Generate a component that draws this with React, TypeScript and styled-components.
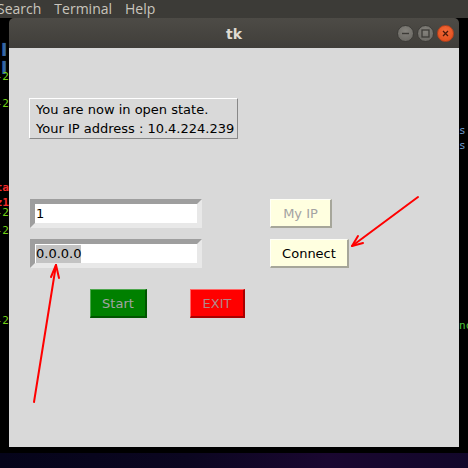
import React from "react";
import styled, { createGlobalStyle } from "styled-components";

const Global = createGlobalStyle`
  html, body { margin: 0; padding: 0; background: #000; }
  body { width: 468px; height: 468px; overflow: hidden; position: relative; }
`;

const Page = styled.div`
  width: 468px;
  height: 468px;
  display: flex;
  flex-direction: column;
  background: #000;
  position: relative;
  overflow: hidden;
`;

const MenuBar = styled.div`
  height: 18px;
  background: #3c3b37;
  display: flex;
  align-items: center;
  gap: 13px;
  margin-left: -3px;
  font-family: "Open Sans", "DejaVu Sans", sans-serif;
  font-size: 14px;
  color: #c9c5bd;
  line-height: 18px;
`;

const MenuItem = styled.span`
  white-space: nowrap;
`;

const TerminalArea = styled.div`
  height: 435px;
  display: flex;
  background: #000;
`;

const Gutter = styled.div<{ $align: "left" | "right" }>`
  width: 9px;
  overflow: hidden;
  display: flex;
  flex-direction: column;
  align-items: ${(p) => (p.$align === "left" ? "flex-end" : "flex-start")};
  font-family: "DejaVu Sans Mono", monospace;
  font-size: 11px;
  line-height: 9px;
`;

const Frag = styled.span<{ $color: string; $top: number; $bold?: boolean }>`
  color: ${(p) => p.$color};
  margin-top: ${(p) => p.$top}px;
  font-weight: ${(p) => (p.$bold ? 700 : 400)};
  white-space: nowrap;
  height: 9px;
`;

const Window = styled.div`
  width: 450px;
  height: 429px;
  display: flex;
  flex-direction: column;
`;

const TitleBar = styled.div`
  height: 30px;
  border-radius: 5px 5px 0 0;
  background: linear-gradient(#4d4b46, #403e3a);
  display: grid;
  grid-template-columns: 1fr auto 1fr;
  align-items: center;
`;

const Title = styled.div`
  grid-column: 2;
  font-family: "DejaVu Sans", sans-serif;
  font-weight: 700;
  font-size: 14px;
  color: #dfdbd2;
  padding-top: 1px;
`;

const Controls = styled.div`
  grid-column: 3;
  justify-self: end;
  display: flex;
  gap: 3px;
  padding-right: 5px;
  padding-top: 1px;
`;

const Circle = styled.div<{ $close?: boolean }>`
  width: 17px;
  height: 17px;
  border-radius: 50%;
  box-sizing: border-box;
  border: 1px solid ${(p) => (p.$close ? "#b8411c" : "#3d3c38")};
  background: ${(p) =>
    p.$close
      ? "radial-gradient(circle at 50% 35%, #f26a3a, #df4a17)"
      : "radial-gradient(circle at 50% 35%, #85837d, #64625d)"};
  display: flex;
  align-items: center;
  justify-content: center;
`;

const Body = styled.div`
  flex: 1;
  background: #d9d9d9;
  padding: 50px 0 0 20px;
  display: flex;
  flex-direction: column;
  align-items: flex-start;
  font-family: "DejaVu Sans", sans-serif;
  font-size: 13px;
`;

const InfoLabel = styled.div`
  width: 209px;
  height: 41px;
  box-sizing: border-box;
  border-style: solid;
  border-width: 1px;
  border-color: #ffffff #888888 #888888 #ffffff;
  padding: 2px 0 0 6px;
  line-height: 18.5px;
  color: #000;
  white-space: nowrap;
`;

const FormGrid = styled.div`
  margin-top: 60px;
  margin-left: 1px;
  display: grid;
  grid-template-columns: 172px auto;
  column-gap: 68px;
  row-gap: 11px;
  align-items: start;
  justify-items: start;
`;

const Entry = styled.div`
  width: 172px;
  height: 29px;
  box-sizing: border-box;
  border-style: solid;
  border-width: 5px;
  border-color: #9e9e9e #e8e8e8 #e8e8e8 #9e9e9e;
  background: #fff;
  display: flex;
  align-items: center;
  padding-left: 1px;
  color: #000;
`;

const Selected = styled.span`
  background: #c3c3c3;
  line-height: 18px;
`;

const TkButton = styled.div<{ $w: number; $bg: string; $fg: string; $light: string; $dark: string }>`
  width: ${(p) => p.$w}px;
  height: 29px;
  box-sizing: border-box;
  background: ${(p) => p.$bg};
  color: ${(p) => p.$fg};
  border-style: solid;
  border-width: 1px 2px 2px 1px;
  border-color: ${(p) => `${p.$light} ${p.$dark} ${p.$dark} ${p.$light}`};
  display: flex;
  align-items: center;
  justify-content: center;
  padding-top: 1px;
`;

const ActionRow = styled.div`
  margin-top: 21px;
  margin-left: 61px;
  display: flex;
  gap: 43px;
`;

const Desktop = styled.div`
  flex: 1;
  background: linear-gradient(90deg, #05041a 0%, #0b0620 40%, #1a0730 70%, #12072a 100%);
`;

const Arrows = styled.svg`
  position: absolute;
  left: 0;
  top: 0;
  pointer-events: none;
`;

export default function App() {
  return (
    <Page>
      <Global />
      <MenuBar>
        <MenuItem>Search</MenuItem>
        <MenuItem>Terminal</MenuItem>
        <MenuItem>Help</MenuItem>
      </MenuBar>
      <TerminalArea>
        <Gutter $align="left">
          <Frag $color="#3465a4" $top={27}>▌</Frag>
          <Frag $color="#3465a4" $top={9}>▌</Frag>
          <Frag $color="#73d216" $top={0}>-2</Frag>
          <Frag $color="#73d216" $top={18}>-2</Frag>
          <Frag $color="#ef2929" $bold $top={75}>ta</Frag>
          <Frag $color="#ef2929" $bold $top={6}>z1</Frag>
          <Frag $color="#73d216" $top={1}>-2</Frag>
          <Frag $color="#73d216" $top={9}>-2</Frag>
          <Frag $color="#73d216" $top={81}>-2</Frag>
        </Gutter>
        <Window>
          <TitleBar>
            <Title>tk</Title>
            <Controls>
              <Circle>
                <svg width="9" height="9" viewBox="0 0 9 9">
                  <path d="M1 4.5h7" stroke="#3c3b37" strokeWidth="1.4" />
                </svg>
              </Circle>
              <Circle>
                <svg width="9" height="9" viewBox="0 0 9 9">
                  <rect x="1" y="1" width="7" height="7" fill="none" stroke="#3c3b37" strokeWidth="1.3" />
                </svg>
              </Circle>
              <Circle $close>
                <svg width="9" height="9" viewBox="0 0 9 9">
                  <path d="M2 2l5 5M7 2l-5 5" stroke="#4a1a0a" strokeWidth="1.3" />
                </svg>
              </Circle>
            </Controls>
          </TitleBar>
          <Body>
            <InfoLabel>
              You are now in open state.
              <br />
              Your IP address : 10.4.224.239
            </InfoLabel>
            <FormGrid>
              <Entry>1</Entry>
              <TkButton $w={62} $bg="#ffffe0" $fg="#a3a3a3" $light="#fffff8" $dark="#a6a69a">
                My IP
              </TkButton>
              <Entry>
                <Selected>0.0.0.0</Selected>
              </Entry>
              <TkButton $w={79} $bg="#ffffe0" $fg="#000" $light="#fffff8" $dark="#a6a69a">
                Connect
              </TkButton>
            </FormGrid>
            <ActionRow>
              <TkButton $w={57} $bg="#008000" $fg="#a3a3a3" $light="#4da64d" $dark="#005500">
                Start
              </TkButton>
              <TkButton $w={55} $bg="#ff0000" $fg="#b08888" $light="#ff6666" $dark="#aa0000">
                EXIT
              </TkButton>
            </ActionRow>
          </Body>
        </Window>
        <Gutter $align="right">
          <Frag $color="#729fcf" $top={108}>s</Frag>
          <Frag $color="#729fcf" $top={6}>s</Frag>
          <Frag $color="#4ec33a" $top={171}>nc</Frag>
        </Gutter>
      </TerminalArea>
      <Desktop />
      <Arrows width="468" height="468" viewBox="0 0 468 468">
        <g stroke="#ff0000" strokeWidth="2" fill="none" strokeLinecap="round">
          <path d="M418 197 L352 246" />
          <path d="M352 246 L358 236 M352 246 L363 243" />
          <path d="M34 402 L56 265" />
          <path d="M56 265 L51 277 M56 265 L59 278" />
        </g>
      </Arrows>
    </Page>
  );
}
